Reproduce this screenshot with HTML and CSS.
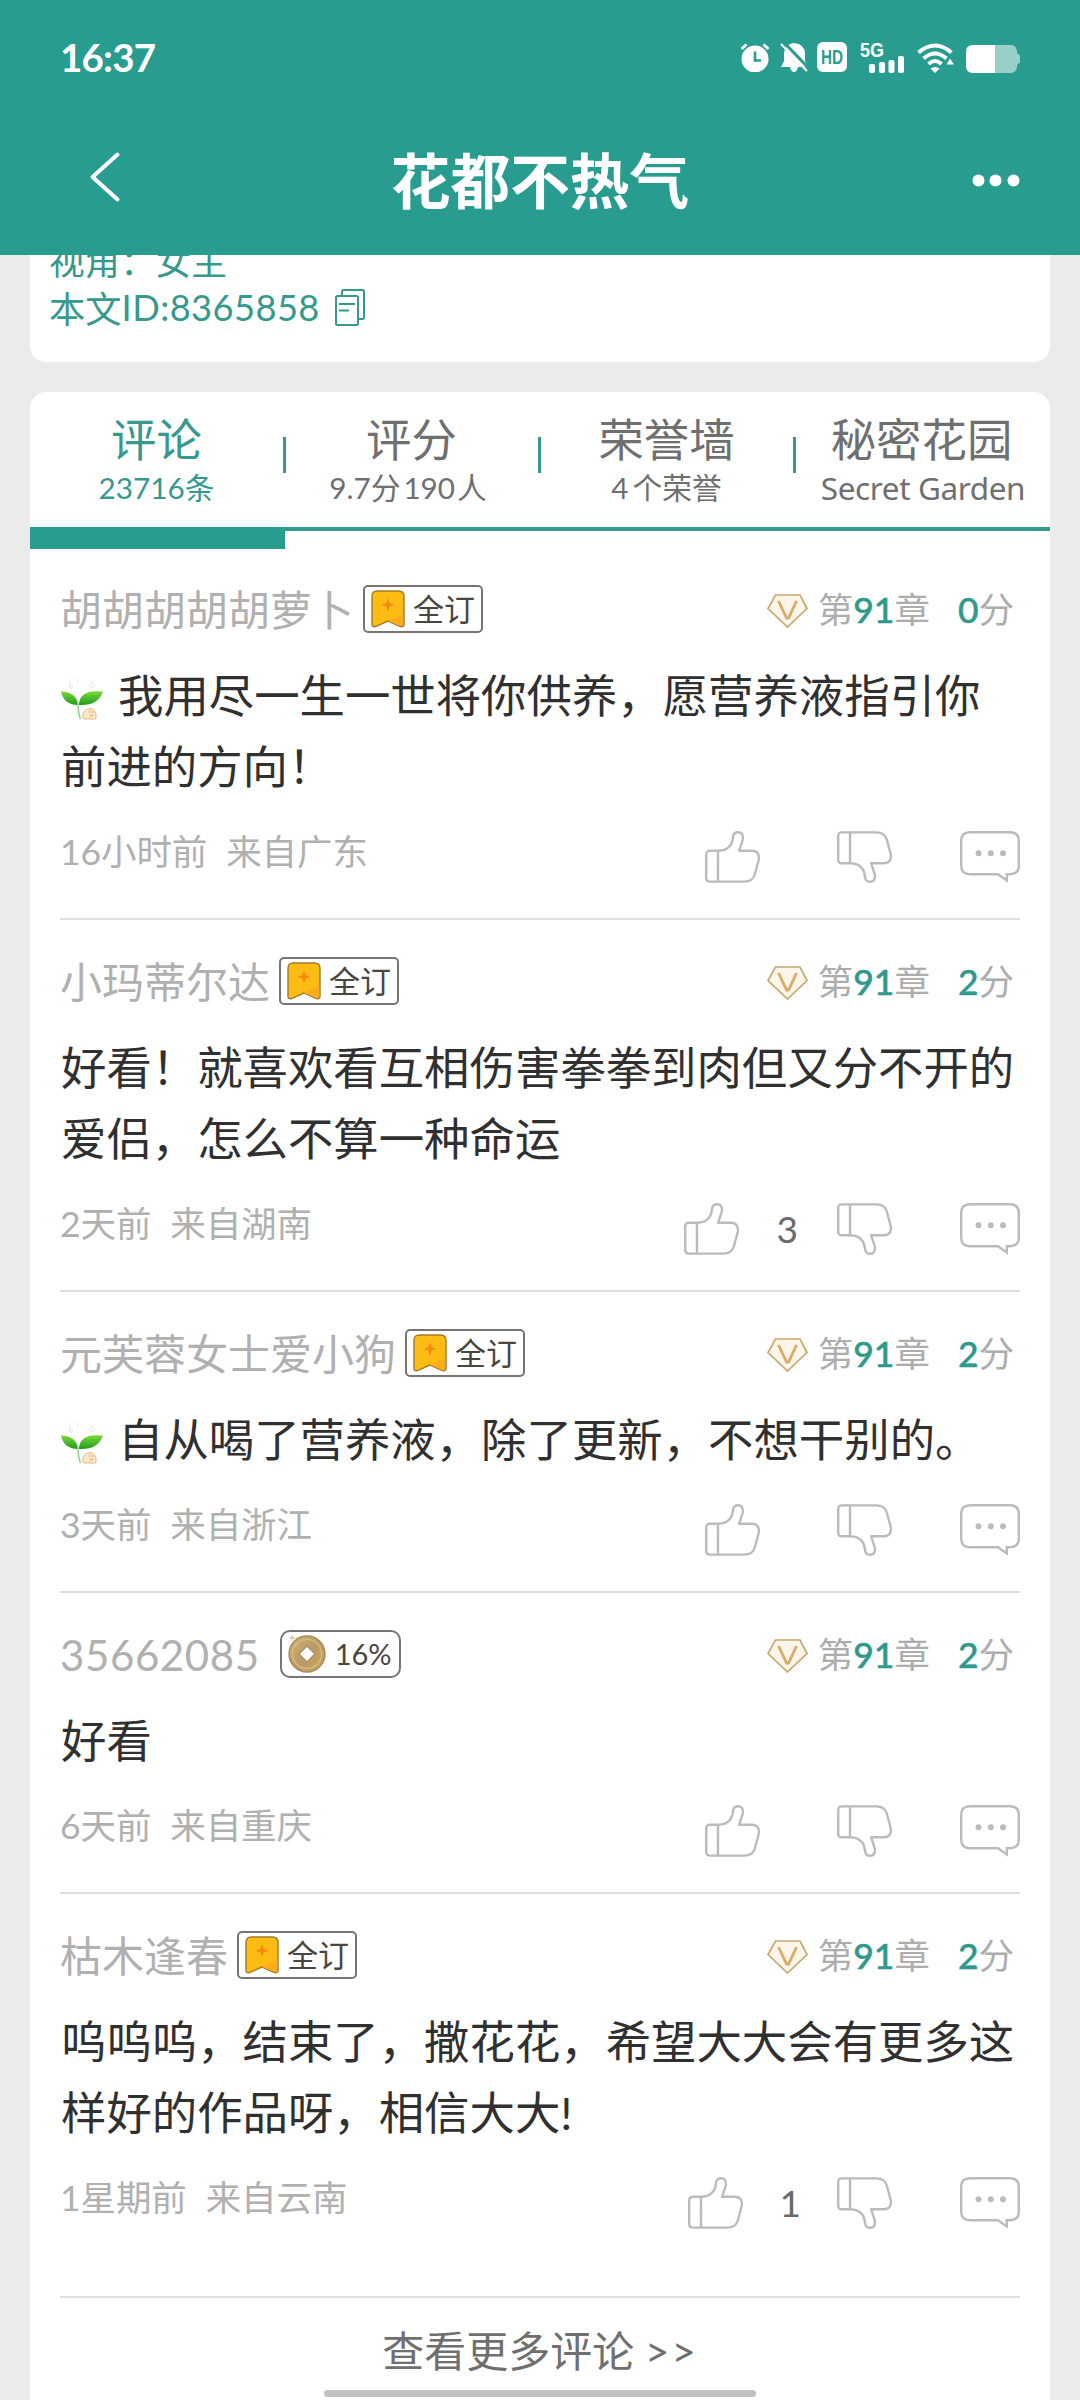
FILE: index.html
```html
<!DOCTYPE html>
<html lang="zh-CN">
<head>
<meta charset="utf-8">
<title>花都不热气</title>
<link rel="stylesheet" href="styles.css">
</head>
<body>
<svg class="defs" width="0" height="0">
  <defs>
    <linearGradient id="leafFill" x1="0" y1="0" x2="0" y2="1"><stop offset="0" stop-color="#7bdc3a"/><stop offset="1" stop-color="#1f9a1c"/></linearGradient>
    <linearGradient id="coinFill" x1="0" y1="0" x2="1" y2="1"><stop offset="0" stop-color="#d6b878"/><stop offset=".5" stop-color="#b99a66"/><stop offset="1" stop-color="#cfa85c"/></linearGradient>
  </defs>
  <symbol id="thumb" viewBox="0 0 55 52">
    <path d="M13 19.7H5Q1.2 19.7 1.2 23.5V47Q1.2 50.6 5 50.6H39Q47.5 50.8 49.8 43.5L53.7 29Q55 20 47 19.7H34.2L37.8 8.5Q38.6 1.2 33 1.2Q29 1.2 28.2 5Q27.6 11 25.6 14Q21.5 19.7 13 19.7V50.6" fill="none" stroke="#bbb" stroke-width="2.4" stroke-linejoin="round"/>
  </symbol>
  <symbol id="bubble" viewBox="0 0 60 52">
    <path d="M10 1.2H50Q58.8 1.2 58.8 10V34.5Q58.8 43.2 50 43.2H46.8V49.5L38 43.2H10Q1.2 43.2 1.2 34.5V10Q1.2 1.2 10 1.2Z" fill="none" stroke="#bbb" stroke-width="2.4"/>
    <g fill="#bbb"><circle cx="18.5" cy="22.3" r="3"/><circle cx="30.8" cy="22.3" r="3"/><circle cx="43" cy="22.3" r="3"/></g>
  </symbol>
  <symbol id="gem" viewBox="0 0 41 34">
    <path d="M8.5 1H33L40 14.5L20.5 33L1 14.5Z" fill="#fcf5ea" stroke="#c6a873" stroke-width="1.7"/>
    <path d="M11.5 7L19.6 24H21.6L29.5 7" fill="none" stroke="#d8ac68" stroke-width="2.8"/>
  </symbol>
  <symbol id="mark" viewBox="0 0 34 38">
    <path d="M6.5 1H27.5Q33 1 33 6.5V34.5Q33 37.4 29.5 36.6L17 31L4.5 36.6Q1 37.4 1 34.5V6.5Q1 1 6.5 1Z" fill="#fcbc14" stroke="#a17a28" stroke-width="1.4"/>
    <path d="M32.3 24L17 31L29.5 36Q32.3 36.8 32.3 34Z" fill="#fbac1c"/>
    <path d="M17 8L18.6 13L23.5 14.8L18.6 16.5L17 21.5L15.4 16.5L10.5 14.8L15.4 13Z" fill="#f58a12"/>
  </symbol>
  <symbol id="sprout" viewBox="0 0 44 48">
    <path d="M18 32Q4 32 1 18.500Q17 19 18 32Z" fill="url(#leafFill)"/>
    <path d="M19 32Q19 16 43 18.500Q38 33 19 32Z" fill="url(#leafFill)"/>
    <path d="M18 30Q18 40 20.500 46" fill="none" stroke="#8ccf86" stroke-width="1.5"/>
    <path d="M22.500 44Q23 36 30 35.500Q37 36 36 46H24Z" fill="#fae6c8" stroke="#e6bd84" stroke-width="1"/>
    <path d="M30 38v2m3-2v2m-3 3q2-2 3 0" stroke="#d9a055" fill="none"/>
    <path d="M11 6q-3 5-1 9q4 2 1-4M32 8q-3 5 0 7q4 0 1-5M17 5l1 6" stroke="#dcefd6" fill="none"/>
  </symbol>
  <symbol id="coin" viewBox="0 0 40 42">
    <circle cx="20" cy="21" r="18" fill="url(#coinFill)" stroke="#a98c5b" stroke-width="1.4"/>
    <circle cx="20" cy="21" r="14.500" fill="none" stroke="#d8bd84" stroke-width="1.2"/>
    <path d="M20 12L29 21L20 30L11 21Z" fill="#a98f6c"/>
    <path d="M20 14L27 21L20 28L13 21Z" fill="#fff"/>
    <path d="M5 2v6M2 5h6" stroke="#d9b878"/>
  </symbol>
</svg>

<header class="top">
  <div class="status">
    <span class="clock">16:37</span>
    <div class="status-icons">
      <svg class="i-alarm" viewBox="0 0 30 30" width="30" height="30"><circle cx="15" cy="17" r="13.500" fill="#fff"/><path d="M1.500 7L6.500 2.500M28.500 7L23.500 2.500" stroke="#fff" stroke-width="3"/><path d="M15 9.500V18.500H21" fill="none" stroke="#299c90" stroke-width="2.600"/></svg>
      <svg class="i-bell" viewBox="0 0 28 31" width="28" height="31"><path d="M14 1Q25 2 25 12V19L28 25H18Q17 30 14 30Q11 30 10 25H1L4 19V11Q5 2 14 1Z" fill="#fff"/><path d="M3.500 0L29 26.500" stroke="#299c90" stroke-width="3"/><path d="M1 2L27 29" stroke="#fff" stroke-width="2"/></svg>
      <svg class="i-hd" viewBox="0 0 30 30" width="30" height="30"><rect width="30" height="30" rx="6" fill="#fff"/><text x="4" y="22" class="hd" textLength="22" lengthAdjust="spacingAndGlyphs">HD</text></svg>
      <svg class="i-sig" viewBox="0 0 45 37" width="45" height="37"><text x="0" y="21" class="g5" textLength="24" lengthAdjust="spacingAndGlyphs">5G</text><g fill="#fff"><rect x="9" y="28" width="6" height="9" rx="2"/><rect x="19" y="26" width="6" height="11" rx="2"/><rect x="28.500" y="24" width="6" height="13" rx="2"/><rect x="38" y="20" width="6" height="17" rx="2"/></g></svg>
      <svg class="i-wifi" viewBox="0 0 37 30" width="37" height="30"><g fill="none" stroke="#fff" stroke-width="3.900"><path d="M1.500 9.500Q18 -4.500 34.500 9.500"/><path d="M6.500 15.500Q18 5.500 29.500 15.500"/><path d="M11.500 21Q18 15 24.500 21"/></g><path d="M13.500 25.500Q18 22.500 22.500 25.500L18 30ZM33 15.500L37 21.500H29.500Z" fill="#fff"/></svg>
      <svg class="i-bat" viewBox="0 0 54 28" width="54" height="28"><path d="M29 0H45Q51 0 51.500 9Q54 9.500 54 11V17Q54 18.500 51.500 19Q51 28 45 28H29Z" fill="#99cfc9"/><path d="M7 0H29V28H7Q0 28 0 21V7Q0 0 7 0Z" fill="#fff"/></svg>
    </div>
  </div>
  <div class="titlebar">
    <svg class="back" viewBox="0 0 32 52" width="32" height="52"><path d="M28.500 3.500L3.500 26L28.500 48.500" fill="none" stroke="#fff" stroke-width="4" stroke-linecap="round" stroke-linejoin="round"/></svg>
    <h1>花都不热气</h1>
    <svg class="more" viewBox="0 0 48 13" width="48" height="13"><g fill="#fff"><circle cx="6.500" cy="6.500" r="6"/><circle cx="23.500" cy="6.500" r="6"/><circle cx="41.500" cy="6.500" r="6"/></g></svg>
  </div>
</header>

<main>
  <section class="info">
    <p>视角：女主</p>
    <p>本文<span class="idno">ID:8365858</span><svg class="copy" viewBox="0 0 30 37" width="30" height="37"><path d="M7 6V2.500Q7 1 8.500 1H27.500Q29 1 29 2.500V28.500Q29 30 27.500 30H24M2.500 7H21.500Q23 7 23 8.500V34.500Q23 36 21.500 36H2.500Q1 36 1 34.500V8.500Q1 7 2.500 7ZM4 15H20M4 21.500H14" fill="none" stroke="#36998e" stroke-width="2"/></svg></p>
  </section>

  <section class="panel">
    <nav class="tabs">
      <div class="tab on"><b>评论</b><span>23716条</span></div>
      <div class="tab"><b>评分</b><span class="rate">9.7分<u>190</u>人</span></div>
      <div class="tab"><b>荣誉墙</b><span class="honor">4<u>个荣誉</u></span></div>
      <div class="tab"><b>秘密花园</b><span class="en">Secret Garden</span></div>
    </nav>
    <div class="rule"><div class="rule-on"></div></div>

    <article class="comment">
      <div class="head"><span class="name">胡胡胡胡胡萝卜</span><span class="tag"><svg width="34" height="38"><use href="#mark"/></svg>全订</span>
        <div class="chap"><svg width="41" height="34"><use href="#gem"/></svg><span>第<i>91</i>章</span><span class="score"><i>0</i>分</span></div></div>
      <p class="text"><svg class="sprout" width="44" height="48"><use href="#sprout"/></svg>我用尽一生一世将你供养，愿营养液指引你<br>前进的方向！</p>
      <div class="foot"><span class="when">16小时前<em>来自广东</em></span><svg class="like" width="55" height="52"><use href="#thumb"/></svg><span class="count"></span><svg class="dislike" width="55" height="52"><use href="#thumb"/></svg><svg width="60" height="52"><use href="#bubble"/></svg></div>
    </article>

    <article class="comment">
      <div class="head"><span class="name">小玛蒂尔达</span><span class="tag"><svg width="34" height="38"><use href="#mark"/></svg>全订</span>
        <div class="chap"><svg width="41" height="34"><use href="#gem"/></svg><span>第<i>91</i>章</span><span class="score"><i>2</i>分</span></div></div>
      <p class="text">好看！就喜欢看互相伤害拳拳到肉但又分不开的<br>爱侣，怎么不算一种命运</p>
      <div class="foot"><span class="when">2天前<em>来自湖南</em></span><svg class="like" width="55" height="52"><use href="#thumb"/></svg><span class="count">3</span><svg class="dislike" width="55" height="52"><use href="#thumb"/></svg><svg width="60" height="52"><use href="#bubble"/></svg></div>
    </article>

    <article class="comment">
      <div class="head"><span class="name">元芙蓉女士爱小狗</span><span class="tag"><svg width="34" height="38"><use href="#mark"/></svg>全订</span>
        <div class="chap"><svg width="41" height="34"><use href="#gem"/></svg><span>第<i>91</i>章</span><span class="score"><i>2</i>分</span></div></div>
      <p class="text"><svg class="sprout" width="44" height="48"><use href="#sprout"/></svg>自从喝了营养液，除了更新，不想干别的。</p>
      <div class="foot"><span class="when">3天前<em>来自浙江</em></span><svg class="like" width="55" height="52"><use href="#thumb"/></svg><span class="count"></span><svg class="dislike" width="55" height="52"><use href="#thumb"/></svg><svg width="60" height="52"><use href="#bubble"/></svg></div>
    </article>

    <article class="comment">
      <div class="head"><span class="name digits">35662085</span><span class="tag pct"><svg width="40" height="42"><use href="#coin"/></svg>16%</span>
        <div class="chap"><svg width="41" height="34"><use href="#gem"/></svg><span>第<i>91</i>章</span><span class="score"><i>2</i>分</span></div></div>
      <p class="text">好看</p>
      <div class="foot"><span class="when">6天前<em>来自重庆</em></span><svg class="like" width="55" height="52"><use href="#thumb"/></svg><span class="count"></span><svg class="dislike" width="55" height="52"><use href="#thumb"/></svg><svg width="60" height="52"><use href="#bubble"/></svg></div>
    </article>

    <article class="comment last">
      <div class="head"><span class="name">枯木逢春</span><span class="tag"><svg width="34" height="38"><use href="#mark"/></svg>全订</span>
        <div class="chap"><svg width="41" height="34"><use href="#gem"/></svg><span>第<i>91</i>章</span><span class="score"><i>2</i>分</span></div></div>
      <p class="text">呜呜呜，结束了，撒花花，希望大大会有更多这<br>样好的作品呀，相信大大!</p>
      <div class="foot"><span class="when">1星期前<em>来自云南</em></span><svg class="like" width="55" height="52"><use href="#thumb"/></svg><span class="count one">1</span><svg class="dislike" width="55" height="52"><use href="#thumb"/></svg><svg width="60" height="52"><use href="#bubble"/></svg></div>
    </article>

    <a class="all">查看更多评论 <span>&gt;&gt;</span></a>
  </section>
</main>
<div class="homebar"></div>
</body>
</html>
```
FILE: styles.css
```css
* { box-sizing: border-box; margin: 0; padding: 0; }
body {
  width: 1080px; height: 2400px; overflow: hidden;
  display: flex; flex-direction: column;
  background: #ebebeb;
  font-family: Lato, "Noto Sans CJK SC", sans-serif;
  white-space: nowrap;
}
svg { flex: none; display: block; }
i, em { font-style: normal; }
u { text-decoration: none; }
.defs { position: absolute; }

.top { flex: none; height: 255px; background: #299c90; color: #fff; position: relative; z-index: 1; }
.status { display: flex; justify-content: space-between; padding: 42px 60px 0 60px; height: 100px; }
.clock { font-size: 38.500px; font-weight: 700; line-height: 30px; letter-spacing: -.8px; }
.status-icons { display: flex; height: 31px; }
.i-bell { margin-left: 10px; }
.i-hd { margin-left: 9px; }
.i-sig { margin: -6px 0 0 13px; }
.i-wifi { margin: 1px 0 0 12px; }
.i-bat { margin: 3px 0 0 12px; }
.hd { font: 700 20px "Liberation Sans", sans-serif; fill: #299c90; }
.g5 { font: 700 20px "Liberation Sans", sans-serif; fill: #fff; }
.titlebar { display: flex; justify-content: space-between; padding: 51px 60px 0 89px; }
.titlebar h1 { font-size: 59.700px; font-weight: 700; line-height: 60px; margin-left: -13px; }
.more { margin-top: 23px; }

.info { margin: -20px 30px 0; height: 127px; padding: 0 19px; background: #fff; border-radius: 0 0 16px 16px; color: #36998e; font-size: 36.300px; }
.info p { display: flex; align-items: center; height: 48px; }
.info p:first-child { font-size: 35.600px; }
.idno { letter-spacing: .4px; }
.copy { margin-left: 15px; }

.panel { margin: 30px 30px 0; height: 2008px; background: #fff; border-radius: 16px 16px 0 0; }
.tabs { display: flex; height: 135px; padding-top: 20px; }
.tab { flex: 0 0 255px; display: flex; flex-direction: column; align-items: center; color: #6f6f6f; position: relative; }
.tab b { font-weight: 400; font-size: 45.400px; line-height: 56px; margin-left: -2px; }
.tab span { font-size: 29.700px; line-height: 40px; margin-left: -2px; }
.tab .rate { margin-left: -9px; }
.tab .rate u { margin: 0 2px 0 3px; }
.tab .honor u { margin-left: 4px; }
.tab .en { font-family: "Noto Sans", sans-serif; font-size: 31.500px; letter-spacing: -.4px; margin-left: 1px; }
.tab.on { color: #36998e; }
.tab:not(:last-child)::after { content: ""; position: absolute; right: -1px; top: 25px; width: 3.500px; height: 36px; background: #36998e; }
.rule { height: 21px; border-top: 4px solid #36998e; }
.rule-on { width: 255px; height: 22px; margin-top: -4px; background: #299c90; }

.comment { margin: 0 30px; padding: 37px 0 35px; border-bottom: 2px solid #dcdcdc; }
.comment.last { padding-bottom: 67px; }
.head { display: flex; align-items: center; height: 48px; }
.name { font-size: 42px; color: #b0b0b0; line-height: 48px; padding-top: 1px; }
.name.digits { letter-spacing: .6px; margin-right: 11px; }
.tag { display: flex; align-items: center; gap: 8px; width: 120px; height: 48px; margin-left: 9px; padding-left: 6px; border: 2px solid #78746f; border-radius: 5px; font-size: 31px; line-height: 44px; color: #4b4540; }
.tag.pct { font-size: 29px; border-radius: 10px; gap: 8px; width: 121px; padding-left: 5px; }
.chap { display: flex; align-items: center; margin-left: auto; padding: 2px 6px 0 0; font-size: 35.500px; line-height: 48px; color: #adadad; }
.chap svg { margin: 1px 10px 0 0; }
.chap i { color: #2f998d; font-weight: 500; -webkit-text-stroke: .5px #2f998d; }
.score { margin-left: 28px; }
.text { margin: 27px 0 0 1px; font-size: 45.400px; line-height: 71px; color: #303030; }
.sprout { display: inline-block; vertical-align: -8px; margin: 0 14px 0 -1px; }
.foot { display: flex; height: 52px; margin-top: 29px; }
.when { margin-right: auto; font-size: 35.500px; letter-spacing: -.1px; line-height: 41px; color: #b0b0b0; }
.when em { margin-left: 19px; }
.count { margin: 4px 39px 0 38px; font-size: 37px; line-height: 44px; color: #6a6a6a; }
.dislike { transform: scaleY(-1); }
.dislike + svg { margin-left: 68px; }
.count.one { margin: 4px 36px 0 37px; }
.all { display: block; text-align: center; font-size: 42px; line-height: 60px; margin-top: 23px; color: #6f6f6f; }
.all span { letter-spacing: 2px; }
.homebar { position: absolute; left: 324px; top: 2390px; width: 432px; height: 7px; border-radius: 4px; background: #c1c1c1; }
```
